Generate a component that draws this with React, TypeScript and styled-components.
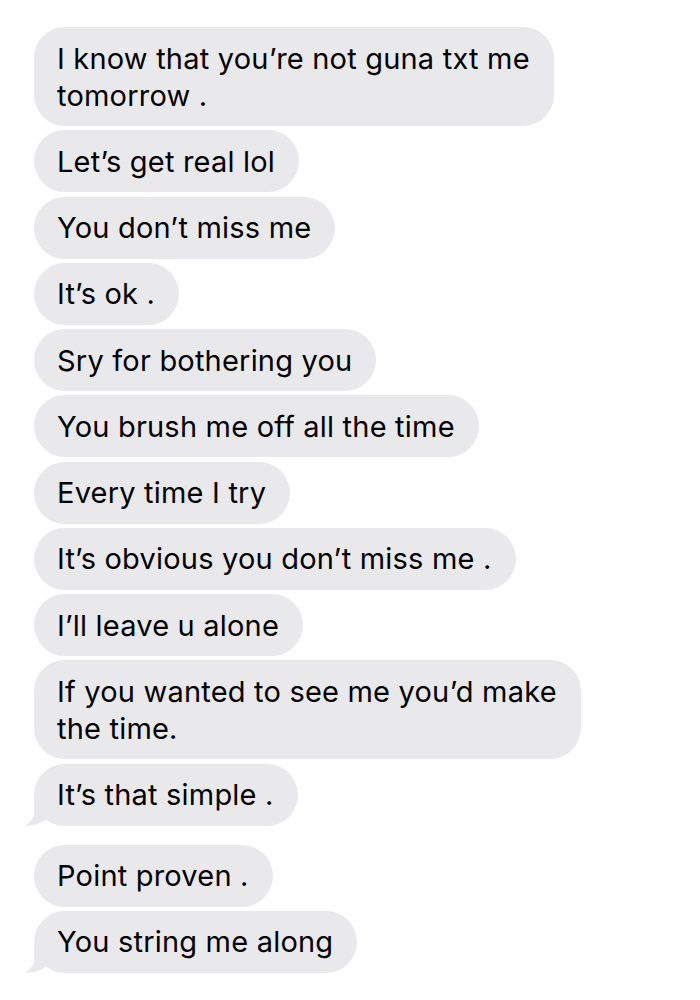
import React from "react";
import styled, { createGlobalStyle } from "styled-components";

const BUBBLE = "#e9e9eb";

const messages: { lines: string[]; tail?: boolean }[] = [
  { lines: ["I know that you’re not guna txt me", "tomorrow ."] },
  { lines: ["Let’s get real lol"] },
  { lines: ["You don’t miss me"] },
  { lines: ["It’s ok ."] },
  { lines: ["Sry for bothering you"] },
  { lines: ["You brush me off all the time"] },
  { lines: ["Every time I try"] },
  { lines: ["It’s obvious you don’t miss me ."] },
  { lines: ["I’ll leave u alone"] },
  { lines: ["If you wanted to see me you’d make", "the time."] },
  { lines: ["It’s that simple ."], tail: true },
  { lines: ["Point proven ."] },
  { lines: ["You string me along"], tail: true },
];

const Tail = () => (
  <TailSvg width="34" height="30" viewBox="0 0 34 30">
    <path
      d="M10 0 L10 17 C10 23 6 27 0 29.5 C8 30.2 15 28 22 24 L32 18 L32 0 Z"
      fill={BUBBLE}
    />
  </TailSvg>
);

const App = () => {
  return (
    <>
      <GlobalStyle />
      <Page>
        <Thread>
          {messages.map((m, i) => (
            <Bubble key={i} $tail={!!m.tail}>
              {m.lines.map((l, j) => (
                <React.Fragment key={j}>
                  {j > 0 && <br />}
                  {l}
                </React.Fragment>
              ))}
              {m.tail && <Tail />}
            </Bubble>
          ))}
        </Thread>
      </Page>
    </>
  );
};

const GlobalStyle = createGlobalStyle`
  html, body {
    margin: 0;
    padding: 0;
    background: #ffffff;
  }
`;

const Page = styled.div`
  width: 700px;
  height: 1000px;
  box-sizing: border-box;
  padding: 27px 0 0 34px;
  background: #ffffff;
  font-family: Inter, "Noto Sans", sans-serif;
`;

const Thread = styled.div`
  display: flex;
  flex-direction: column;
  align-items: flex-start;
  gap: 4.25px;
`;

const Bubble = styled.div<{ $tail: boolean }>`
  position: relative;
  box-sizing: border-box;
  padding: 12.5px 24px 12.5px 23px;
  border-radius: 31px;
  background: ${BUBBLE};
  color: #000;
  font-size: 29px;
  letter-spacing: 0.2px;
  line-height: 37px;
  white-space: nowrap;
  margin-bottom: ${(p) => (p.$tail ? "14.75px" : "0")};
`;

const TailSvg = styled.svg`
  position: absolute;
  left: -10px;
  bottom: -0.5px;
  display: block;
`;

export default App;
